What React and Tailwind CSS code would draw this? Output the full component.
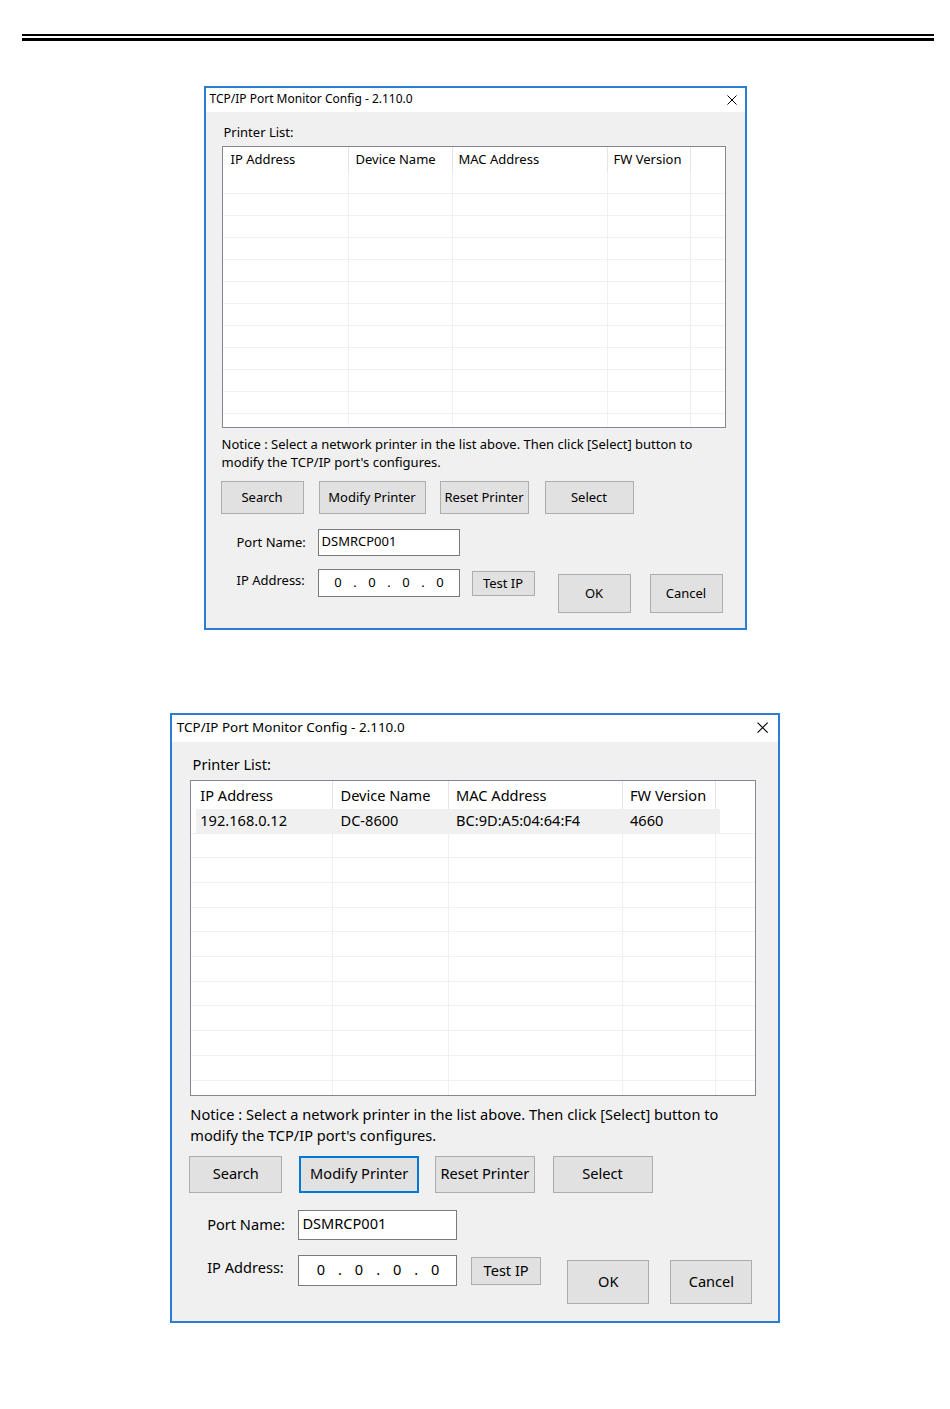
import React from 'react';

const COLS = [
    { w: 'w-[126px]', pl: 'pl-[8px]', name: 'IP Address' },
    { w: 'w-[104px]', pl: 'pl-[7px]', name: 'Device Name' },
    { w: 'w-[155px]', pl: 'pl-[6px]', name: 'MAC Address' },
    { w: 'w-[83px]', pl: 'pl-[6px]', name: 'FW Version' },
];

const ROW = ['192.168.0.12', 'DC-8600', 'BC:9D:A5:04:64:F4', '4660'];

function Btn({ className, children, focused }) {
    return (
        <div
            className={
                'flex items-center justify-center bg-[#e1e1e1] text-black whitespace-nowrap ' +
                (focused ? 'border-2 border-[#0078d7] ' : 'border border-[#adadad] ') +
                className
            }
        >
            {children}
        </div>
    );
}

function EmptyRow() {
    return (
        <div className="flex h-[22px] shrink-0 border-b border-[#f0f0f0]">
            {COLS.map((c) => (
                <div key={c.name} className={c.w + ' border-r border-[#f0f0f0]'} />
            ))}
            <div className="flex-1" />
        </div>
    );
}

function PrinterTable({ filled }) {
    const empties = filled ? 11 : 12;
    return (
        <div className="ml-[16px] mt-[5px] w-[504px] h-[282px] border border-[#828790] bg-white overflow-hidden flex flex-col">
            {/* header */}
            <div className="flex h-[25px] shrink-0">
                {COLS.map((c) => (
                    <div key={c.name} className={c.w + ' ' + c.pl + ' border-r border-[#e5e5e5] leading-[25px] whitespace-nowrap'}>
                        {c.name}
                    </div>
                ))}
            </div>

            {filled && (
                <div className="flex h-[22px] shrink-0 border-b border-[#f0f0f0]">
                    <div className="w-[4px]" />
                    <div className="flex w-[467px] bg-[#f0f0f0] leading-[21px] whitespace-nowrap">
                        <div className="w-[122px] pl-[4px]">{ROW[0]}</div>
                        <div className="w-[104px] pl-[7px]">{ROW[1]}</div>
                        <div className="w-[155px] pl-[6px]">{ROW[2]}</div>
                        <div className="w-[86px] pl-[6px]">{ROW[3]}</div>
                    </div>
                    <div className="flex-1" />
                </div>
            )}

            {Array.from({ length: empties }).map((_, i) => (
                <EmptyRow key={i} />
            ))}
        </div>
    );
}

function Dialog({ filled }) {
    return (
        <div className="w-[543px] h-[544px] border-2 border-[#2b7cd3] bg-[#f0f0f0] flex flex-col text-[13px] text-black font-['Noto_Sans','DejaVu_Sans',sans-serif]">
            {/* title bar */}
            <div className="h-[24px] shrink-0 bg-white flex items-center justify-between pl-[4px] pr-[8px] pb-[3px]">
                <span className="text-[12px] whitespace-nowrap">TCP/IP Port Monitor Config - 2.110.0</span>
                <svg width="10" height="10" viewBox="0 0 10 10" className="mt-[2px]">
                    <path d="M0.5 0.5 L9.5 9.5 M9.5 0.5 L0.5 9.5" stroke="#000" strokeWidth="1" fill="none" />
                </svg>
            </div>

            <div className="flex-1 flex flex-col">
                <div className="ml-[18px] mt-[11px] leading-[18px]">Printer List:</div>

                <PrinterTable filled={filled} />

                <div className="ml-[16px] mt-[7px] leading-[18px] w-[500px]">
                    <div className="whitespace-nowrap">Notice : Select a network printer in the list above. Then click [Select] button to</div>
                    <div className="whitespace-nowrap">modify the TCP/IP port's configures.</div>
                </div>

                {/* action buttons */}
                <div className="ml-[15px] mt-[10px] flex h-[33px]">
                    <Btn className="w-[83px] h-[33px]">Search</Btn>
                    <Btn className="ml-[15px] w-[107px] h-[33px]" focused={filled}>Modify Printer</Btn>
                    <Btn className="ml-[14px] w-[89px] h-[33px]">Reset Printer</Btn>
                    <Btn className="ml-[16px] w-[89px] h-[33px]">Select</Btn>
                </div>

                {/* port name */}
                <div className="ml-[31px] mt-[15px] flex items-center h-[27px]">
                    <div className="w-[81px] whitespace-nowrap">Port Name:</div>
                    <div className="w-[142px] h-[27px] bg-white border border-[#7a7a7a] flex items-center pl-[3px] pb-[1px]">DSMRCP001</div>
                </div>

                {/* ip address */}
                <div className="ml-[31px] mt-[13px] flex items-start">
                    <div className="w-[81px] mt-[2px] leading-[18px] whitespace-nowrap">IP Address:</div>
                    <div className="w-[142px] h-[28px] bg-white border border-[#7a7a7a] flex items-center pl-[13px]">
                        <span className="w-[13px] text-center">0</span>
                        <span className="w-[21px] text-center">.</span>
                        <span className="w-[13px] text-center">0</span>
                        <span className="w-[21px] text-center">.</span>
                        <span className="w-[13px] text-center">0</span>
                        <span className="w-[21px] text-center">.</span>
                        <span className="w-[13px] text-center">0</span>
                    </div>
                    <Btn className="ml-[12px] mt-[2px] w-[63px] h-[25px]">Test IP</Btn>
                    <Btn className="ml-[23px] mt-[5px] w-[73px] h-[39px]">OK</Btn>
                    <Btn className="ml-[19px] mt-[5px] w-[73px] h-[39px]">Cancel</Btn>
                </div>
            </div>
        </div>
    );
}

export default function App() {
    return (
        <div className="w-[950px] min-h-[1409px] bg-white">
            <div className="pt-[34px] pl-[22px] pr-[16px]">
                <div className="h-[2px] bg-black" />
                <div className="mt-[2px] h-[3px] bg-black" />
            </div>

            <div className="mt-[45px] flex justify-center">
                <Dialog filled={false} />
            </div>

            <div className="mt-[83px] flex justify-center">
                <div className="[zoom:1.122]">
                    <Dialog filled={true} />
                </div>
            </div>
        </div>
    );
}
